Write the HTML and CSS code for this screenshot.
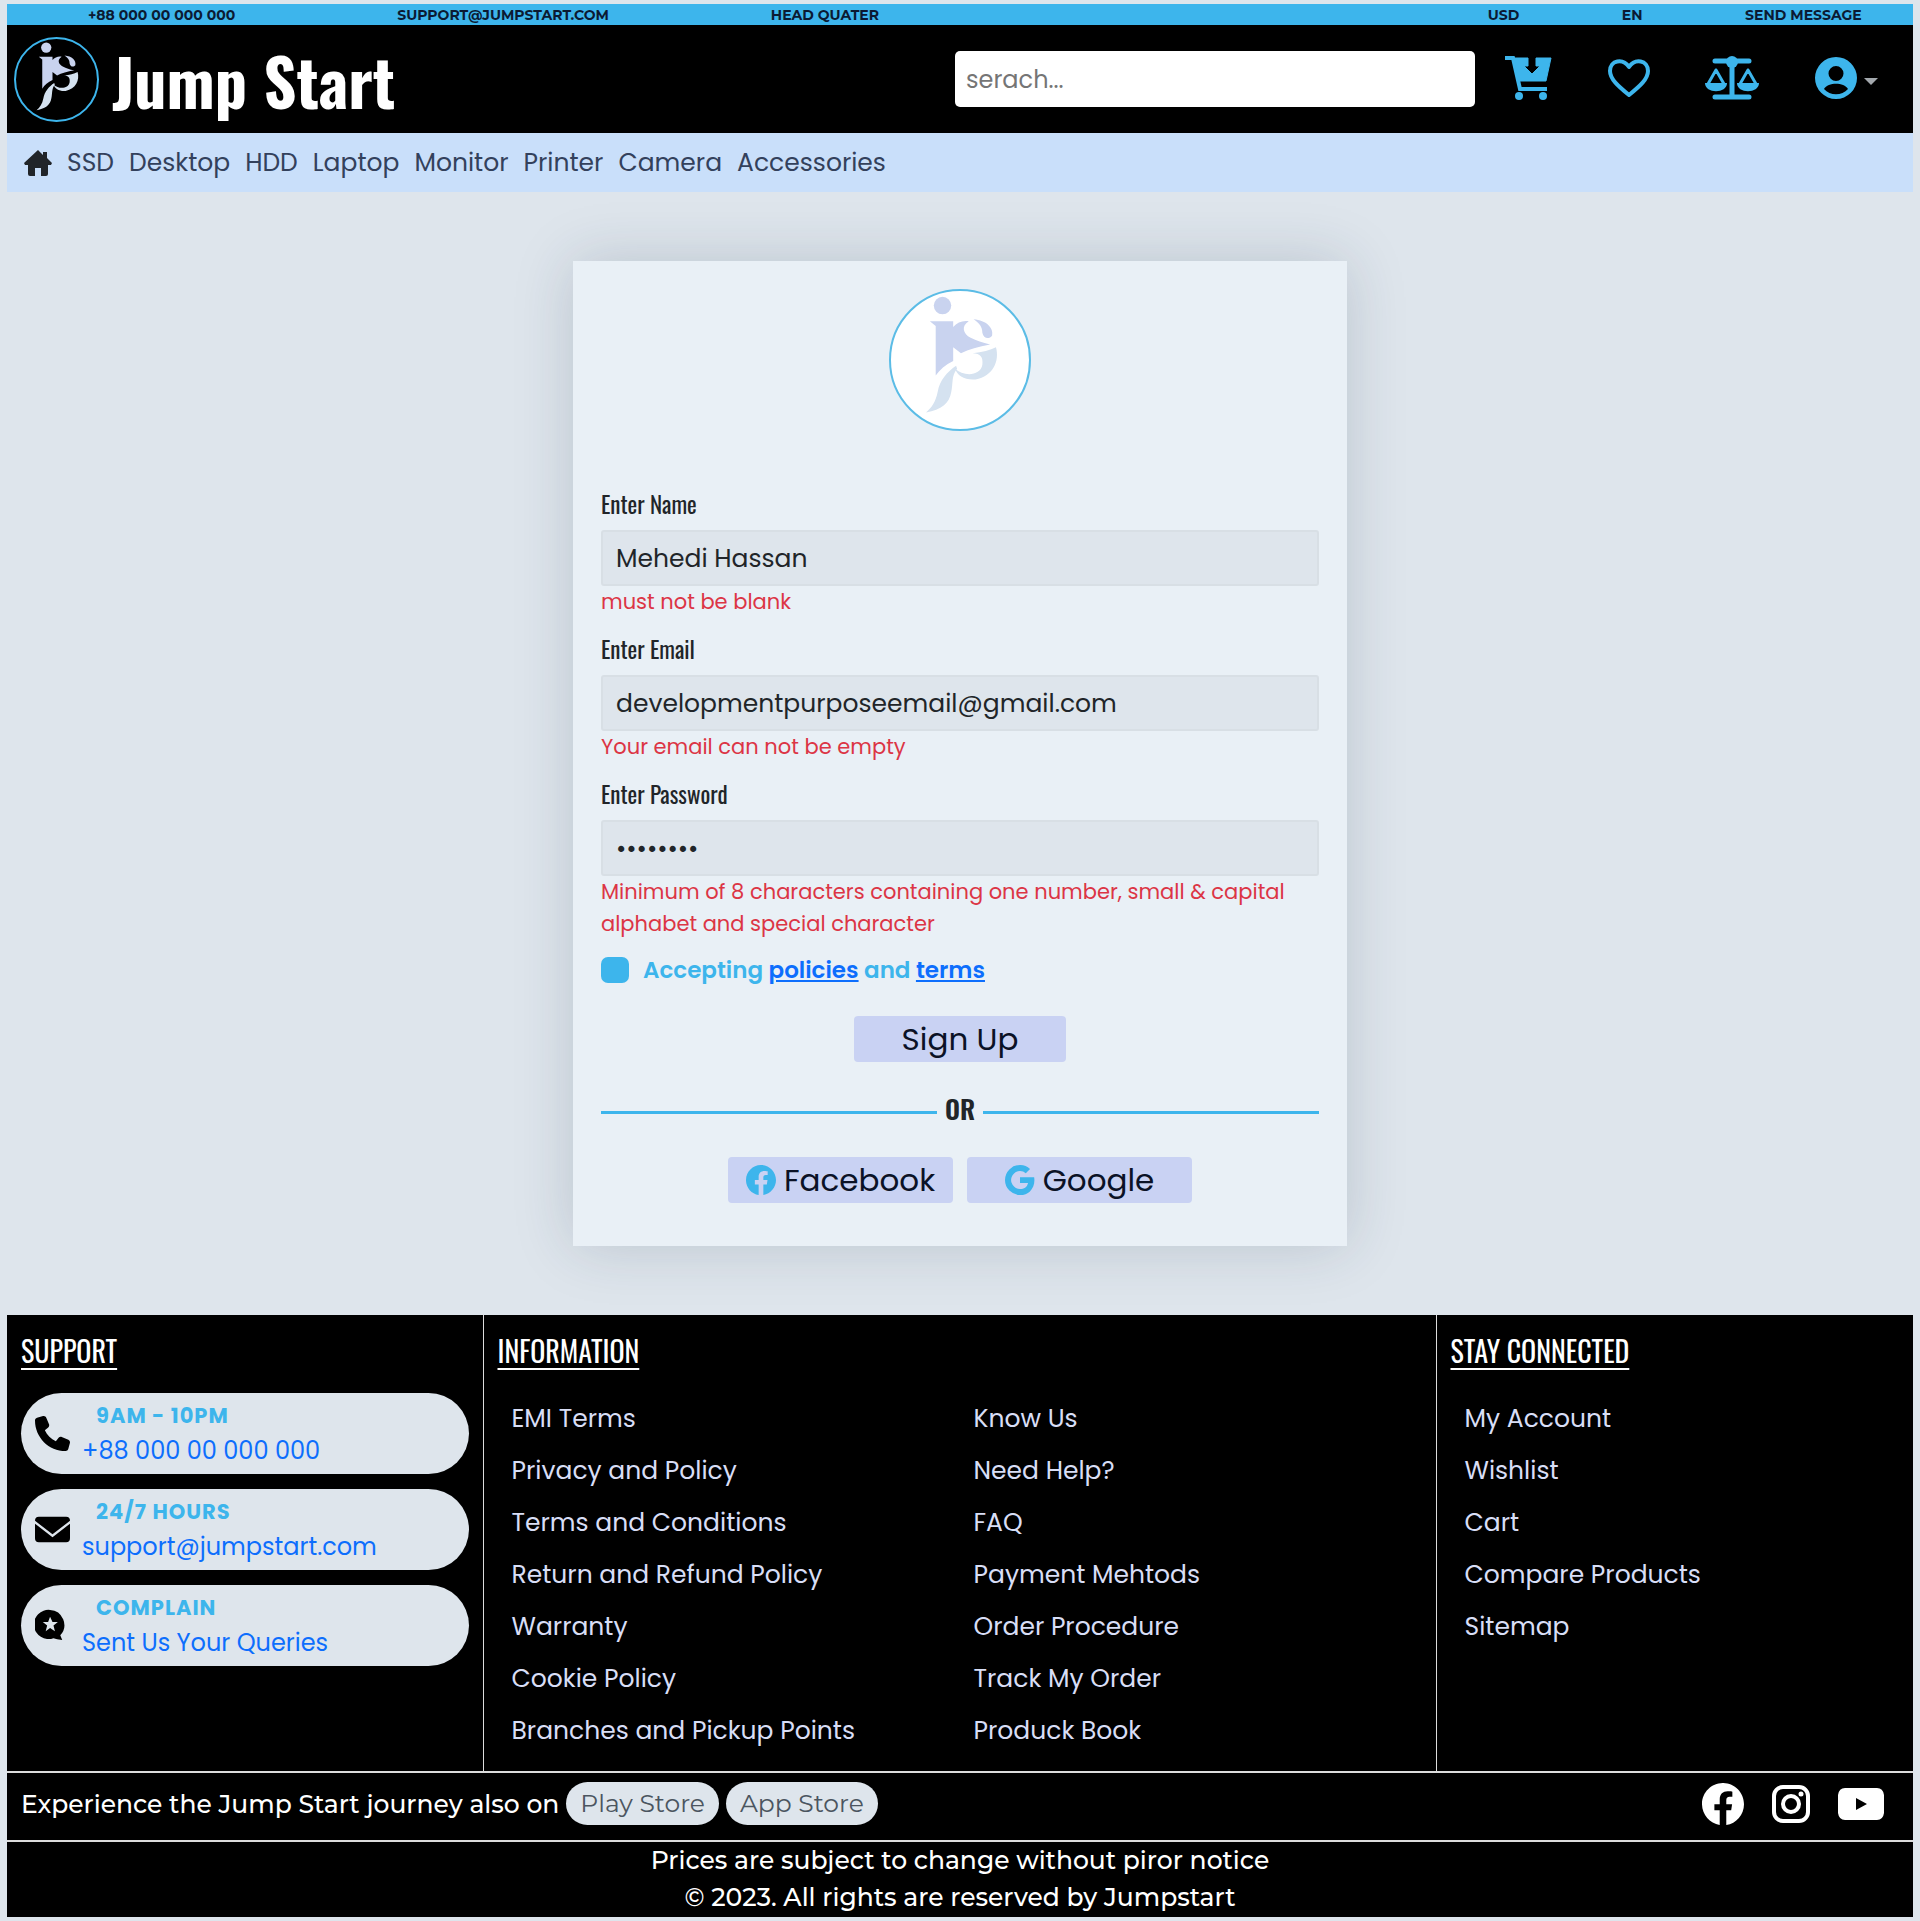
FILE: index.html
```html
<!DOCTYPE html>
<html lang="en">
<head>
<meta charset="utf-8">
<meta name="viewport" content="width=device-width, initial-scale=1">
<title>Jump Start - Sign Up</title>
<link rel="stylesheet" href="styles.css">
</head>
<body>
<svg class="sprite" aria-hidden="true">
  <symbol id="mark" viewBox="0 0 142 142">
    <circle class="mark-a" cx="53" cy="15" r="9"/>
    <path class="mark-a" d="M40 31H64V37C68 32 74 30 80 31C72 36 74 44 82 48C88 51 94 53 102 55C90 57 80 60 72 64L64 58V72C56 76 50 81 46 87V36Z"/>
    <path class="mark-a" d="M85 29C98 30 106 38 104 46C101 50 95 49 94 43C94 37 91 33 85 29Z"/>
    <path class="mark-b" d="M108 58C112 72 105 88 87 91C76 92 68 87 66 80C74 88 92 88 94 76C95 68 92 64 84 64C94 63 102 61 108 58Z"/>
    <path class="mark-b" d="M67 77C58 83 50 92 48 104C46 114 42 120 36 125C52 122 60 116 62 104C64 96 62 87 68 80Z"/>
  </symbol>
  <symbol id="facebook" viewBox="0 0 16 16"><path d="M16 8.049c0-4.446-3.582-8.05-8-8.05C3.58 0-.002 3.603-.002 8.05c0 4.017 2.926 7.347 6.75 7.951v-5.625h-2.03V8.05H6.75V6.275c0-2.017 1.195-3.131 3.022-3.131.876 0 1.791.157 1.791.157v1.98h-1.009c-.993 0-1.303.621-1.303 1.258v1.51h2.218l-.354 2.326H9.25V16c3.824-.604 6.75-3.934 6.75-7.951z"/></symbol>
</svg>

<div class="page">
  <header>
    <div class="topbar">
      <div class="topbar-left">
        <a href="#">+88 000 00 000 000</a>
        <a href="#">SUPPORT@JUMPSTART.COM</a>
        <a href="#">HEAD QUATER</a>
      </div>
      <div class="topbar-right">
        <a href="#">USD</a>
        <a href="#">EN</a>
        <a href="#">SEND MESSAGE</a>
      </div>
    </div>

    <div class="masthead">
      <a class="brand" href="#">
        <svg class="brand-logo" aria-hidden="true"><use href="#mark"/></svg>
        <span class="brand-name">Jump Start</span>
      </a>
      <div class="tools">
        <input class="search" type="search" placeholder="serach..." aria-label="Search">
        <nav class="actions" aria-label="Account">
          <a href="#" aria-label="Cart">
            <svg class="ico" viewBox="0 0 48 44">
              <path d="M1 2H9L16 33H43" fill="none" stroke="currentColor" stroke-width="4"/>
              <path d="M10 2H24V10H20L28 18L36 10H32V2H47L42 25H14Z" stroke="currentColor" stroke-width="1" stroke-linejoin="round"/>
              <circle cx="15" cy="40" r="4"/><circle cx="39" cy="40" r="4"/>
            </svg>
          </a>
          <a href="#" aria-label="Wishlist">
            <svg class="ico" viewBox="0 0 48 44">
              <path d="M24 39C13 30 5 23 5 15C5 4 18 2 24 11C30 2 43 4 43 15C43 23 35 30 24 39Z" fill="none" stroke="currentColor" stroke-width="4" stroke-linejoin="round"/>
            </svg>
          </a>
          <a href="#" aria-label="Compare">
            <svg class="ico ico-wide" viewBox="0 0 54 44">
              <path d="M10 5H44M10 41H44M27 5V40" fill="none" stroke="currentColor" stroke-width="5" stroke-linecap="round"/>
              <circle cx="27" cy="6" r="6"/>
              <path d="M11 14L3 28M11 14L19 28M43 14L35 28M43 14L51 28" fill="none" stroke="currentColor" stroke-width="3" stroke-linecap="round"/>
              <path d="M0 27H22C22 38 0 38 0 27ZM32 27H54C54 38 32 38 32 27Z"/>
            </svg>
          </a>
          <a class="account" href="#" aria-label="Profile">
            <svg class="ico" viewBox="0 0 44 44">
              <path fill-rule="evenodd" d="M22 1A21 21 0 1 1 22 43A21 21 0 1 1 22 1ZM22 10A7.500 7.500 0 1 0 22 25A7.500 7.500 0 1 0 22 10ZM10 33C16 40 28 40 34 33C30 26 14 26 10 33Z"/>
            </svg>
            <span class="caret"></span>
          </a>
        </nav>
      </div>
    </div>

    <nav class="menu" aria-label="Categories">
      <a href="#" aria-label="Home"><svg class="home" viewBox="0 0 28 26"><path d="M14 0L0 13L1 15H4V24Q4 26 6 26H11V18H17V26H22Q24 26 24 24V15H27L28 13L23 8V2H19V5Z"/></svg></a>
      <a href="#">SSD</a>
      <a href="#">Desktop</a>
      <a href="#">HDD</a>
      <a href="#">Laptop</a>
      <a href="#">Monitor</a>
      <a href="#">Printer</a>
      <a href="#">Camera</a>
      <a href="#">Accessories</a>
    </nav>
  </header>

  <main>
    <form class="card">
      <svg class="card-logo" aria-hidden="true"><use href="#mark"/></svg>
      <div class="field">
        <label for="name">Enter Name</label>
        <input id="name" type="text" value="Mehedi Hassan">
        <p class="error">must not be blank</p>
      </div>
      <div class="field">
        <label for="email">Enter Email</label>
        <input id="email" type="email" value="developmentpurposeemail@gmail.com">
        <p class="error">Your email can not be empty</p>
      </div>
      <div class="field">
        <label for="password">Enter Password</label>
        <input id="password" type="password" value="Abcd123!">
        <p class="error">Minimum of 8 characters containing one number, small &amp; capital alphabet and special character</p>
      </div>
      <div class="accept">
        <input id="accept" type="checkbox">
        <label for="accept">Accepting <a href="#">policies</a> and <a href="#">terms</a></label>
      </div>
      <button class="btn btn-main" type="submit">Sign Up</button>
      <div class="divider"><span>OR</span></div>
      <div class="social-login">
        <button class="btn" type="button"><svg aria-hidden="true"><use href="#facebook"/></svg>Facebook</button>
        <button class="btn" type="button"><svg viewBox="0 0 16 16" aria-hidden="true"><path d="M15.545 6.558a9.42 9.42 0 0 1 .139 1.626c0 2.434-.87 4.492-2.384 5.885h.002C11.978 15.292 10.158 16 8 16A8 8 0 1 1 8 0a7.689 7.689 0 0 1 5.352 2.082l-2.284 2.284A4.347 4.347 0 0 0 8 3.166c-2.087 0-3.86 1.408-4.492 3.304a4.792 4.792 0 0 0 0 3.063h.003c.635 1.893 2.405 3.301 4.492 3.301 1.078 0 2.004-.276 2.722-.764h-.003a3.702 3.702 0 0 0 1.599-2.431H8v-3.08h7.545z"/></svg>Google</button>
      </div>
    </form>
  </main>

  <footer>
    <div class="columns">
      <section>
        <h2>SUPPORT</h2>
        <div class="pills">
          <div class="pill">
            <svg viewBox="0 0 512 512" aria-hidden="true"><path d="M164.900 24.600c-7.700-18.600-28-28.500-47.400-23.200l-88 24C12.100 30.200 0 46 0 64C0 311.400 200.600 512 448 512c18 0 33.800-12.100 38.600-29.500l24-88c5.300-19.400-4.600-39.700-23.200-47.400l-96-40c-16.300-6.800-35.200-2.100-46.300 11.600L304.700 368C234.300 334.700 177.300 277.700 144 207.300L193.300 167c13.700-11.200 18.400-30 11.600-46.300l-40-96z"/></svg>
            <div><h3>9AM - 10PM</h3><a href="#">+88 000 00 000 000</a></div>
          </div>
          <div class="pill">
            <svg viewBox="0 0 36 36" aria-hidden="true"><path d="M4 5H32Q36 5 36 9L18 23L0 9Q0 5 4 5ZM0 12L18 26L36 12V27Q36 31 32 31H4Q0 31 0 27Z"/></svg>
            <div><h3>24/7 HOURS</h3><a href="#">support@jumpstart.com</a></div>
          </div>
          <div class="pill">
            <svg viewBox="0 0 36 36" aria-hidden="true"><path fill-rule="evenodd" d="M15.500 2A15.500 15.500 0 0 1 26 28L28 33Q22 32 19 31A15 15 0 1 1 15.500 2ZM15.500 9L13.500 14.500H8L12.500 18L11 24L15.500 20.500L20.500 24L19 18L23.500 14.500H18Z"/></svg>
            <div><h3>COMPLAIN</h3><a href="#">Sent Us Your Queries</a></div>
          </div>
        </div>
      </section>
      <section>
        <h2>INFORMATION</h2>
        <div class="lists">
          <ul>
            <li><a href="#">EMI Terms</a></li>
            <li><a href="#">Privacy and Policy</a></li>
            <li><a href="#">Terms and Conditions</a></li>
            <li><a href="#">Return and Refund Policy</a></li>
            <li><a href="#">Warranty</a></li>
            <li><a href="#">Cookie Policy</a></li>
            <li><a href="#">Branches and Pickup Points</a></li>
          </ul>
          <ul>
            <li><a href="#">Know Us</a></li>
            <li><a href="#">Need Help?</a></li>
            <li><a href="#">FAQ</a></li>
            <li><a href="#">Payment Mehtods</a></li>
            <li><a href="#">Order Procedure</a></li>
            <li><a href="#">Track My Order</a></li>
            <li><a href="#">Produck Book</a></li>
          </ul>
        </div>
      </section>
      <section>
        <h2>STAY CONNECTED</h2>
        <ul>
          <li><a href="#">My Account</a></li>
          <li><a href="#">Wishlist</a></li>
          <li><a href="#">Cart</a></li>
          <li><a href="#">Compare Products</a></li>
          <li><a href="#">Sitemap</a></li>
        </ul>
      </section>
    </div>
    <div class="apps">
      <div class="stores">
        <span>Experience the Jump Start journey also on</span>
        <a href="#">Play Store</a>
        <a href="#">App Store</a>
      </div>
      <div class="social">
        <a href="#" aria-label="Facebook"><svg width="42" height="42"><use href="#facebook"/></svg></a>
        <a href="#" aria-label="Instagram"><svg width="38" height="38" viewBox="0 0 38 38"><rect x="2" y="2" width="34" height="34" rx="9" fill="none" stroke="currentColor" stroke-width="4"/><circle cx="19" cy="19" r="8" fill="none" stroke="currentColor" stroke-width="4"/><circle cx="29" cy="9" r="2.500"/></svg></a>
        <a href="#" aria-label="YouTube"><svg width="46" height="32" viewBox="0 0 46 32"><path fill-rule="evenodd" d="M7 0H39Q45 0 46 7V25Q45 32 39 32H7Q1 32 0 25V7Q1 0 7 0ZM18 10V22L29 16Z"/></svg></a>
      </div>
    </div>
    <div class="legal">
      <p>Prices are subject to change without piror notice</p>
      <p>© 2023. All rights are reserved by Jumpstart</p>
    </div>
  </footer>
</div>
</body>
</html>
```
FILE: styles.css
```css
:root {
  --sky: #3db5ec;
  --mist: #dee5ec;
  --lavender: #c9d2f3;
  --link: #0d6efd;
  --ink: #212529;
  --condensed: "Oswald", "Liberation Sans Narrow", "DejaVu Sans Condensed", sans-serif;
}

* { box-sizing: border-box; }

body {
  margin: 0;
  background: var(--mist);
  color: var(--ink);
  font-family: "Poppins", Inter, sans-serif;
  font-size: 25px;
}

a { color: inherit; text-decoration: none; }
p, h2, h3, ul { margin: 0; padding: 0; }
ul { list-style: none; }
svg { fill: currentColor; display: block; }
.sprite { display: none; }
.mark-a { fill: #c9d3ef; }
.mark-b { fill: #d5e2f0; }

.page { padding: 4px 7px; }

/* Header */
.topbar {
  display: flex;
  justify-content: space-between;
  padding-top: 1px;
  background: var(--sky);
  color: #0b1a33;
  font-family: "Montserrat", Inter, sans-serif;
  font-size: 14px;
  font-weight: 700;
  line-height: 20px;
}
.topbar-left, .topbar-right { display: flex; justify-content: space-around; }
.topbar-left { width: 50%; }
.topbar-right { width: 25%; }

.masthead {
  display: flex;
  align-items: center;
  height: 108px;
  background: #000;
}
.brand {
  display: flex;
  flex: 1;
  align-items: center;
  gap: 13px;
  padding-left: 7px;
  color: #fff;
  font-family: var(--condensed);
  font-size: 64px;
  font-weight: 700;
}
.brand-name { padding-top: 2px; }
.brand-logo {
  width: 85px;
  height: 85px;
  border: 2px solid var(--sky);
  border-radius: 50%;
}
.brand .mark-a { fill: #e3e8fb; }
.tools {
  display: flex;
  align-items: center;
  width: 958px;
  padding-right: 35px;
}
.search {
  width: 520px;
  height: 56px;
  padding: 0 11px;
  border: 0;
  border-radius: 5px;
  background: #fff;
  font: inherit;
  font-size: 24px;
}
.search::placeholder { color: #757575; opacity: 1; }
.actions {
  display: flex;
  flex: 1;
  align-items: center;
  justify-content: space-between;
  padding: 0 0 3px 29px;
  color: var(--sky);
}
.ico { width: 48px; height: 44px; }
.ico-wide { width: 54px; }
.account { display: flex; align-items: center; gap: 4px; }
.caret {
  border: 7px solid transparent;
  border-top-color: #a3a8ad;
  border-bottom: 0;
  margin-top: 8px;
}

.menu {
  display: flex;
  align-items: center;
  gap: 15px;
  height: 59px;
  padding: 0 17px;
  background: #c9dffa;
  color: #33415c;
}
.home { width: 28px; height: 26px; color: var(--ink); }

/* Sign-up card */
main { padding: 69px 0; }
.card {
  display: flex;
  flex-direction: column;
  width: 774px;
  max-width: 100%;
  margin: 0 auto;
  padding: 28px 28px 43px;
  background: #e9f0f6;
  box-shadow: 0 0 56px rgba(33, 50, 70, 0.18);
}
.card-logo {
  align-self: center;
  width: 142px;
  height: 142px;
  margin-bottom: 56px;
  border: 2px solid #5bbce6;
  border-radius: 50%;
  background: #fff;
}
.field { display: flex; flex-direction: column; margin-bottom: 14px; }
.field label {
  margin-bottom: 8px;
  font-family: var(--condensed);
  font-size: 23px;
  line-height: 35px;
}
.field input {
  height: 56px;
  padding: 2px 13px 0;
  border: 2px solid #d8dfe5;
  border-radius: 3px;
  background: var(--mist);
  color: var(--ink);
  font: inherit;
}
.error { color: #dc3545; font-size: 21px; line-height: 32px; }

.accept { display: flex; align-items: center; gap: 14px; line-height: 32px; }
.accept input {
  appearance: none;
  width: 28px;
  height: 26px;
  margin: 0;
  border-radius: 7px;
  background: var(--sky);
}
.accept label { color: var(--sky); font-size: 23px; font-weight: 600; }
.accept a { color: var(--link); text-decoration: underline; }

.btn {
  display: flex;
  align-items: center;
  justify-content: center;
  gap: 8px;
  width: 225px;
  height: 46px;
  padding: 0;
  border: 0;
  border-radius: 4px;
  background: var(--lavender);
  color: #0b1226;
  font: inherit;
  font-size: 31px;
}
.btn svg { width: 30px; height: 30px; color: var(--sky); }
.btn-main { align-self: center; width: 212px; margin-top: 30px; }

.divider {
  display: flex;
  align-items: center;
  gap: 8px;
  margin: 29px 0 30px;
  font-family: var(--condensed);
  font-size: 26px;
  font-weight: 600;
  line-height: 36px;
}
.divider::before, .divider::after {
  content: "";
  flex: 1;
  height: 3px;
  margin-top: 6px;
  background: var(--sky);
}
.social-login { display: flex; justify-content: center; gap: 14px; }

/* Footer */
footer { background: #000; color: #fff; }
.columns {
  display: grid;
  grid-template-columns: 1fr 2fr 1fr;
  border-bottom: 2px solid #dcdcdc;
}
.columns section { padding: 14px; }
.columns section:not(:last-child) { border-right: 1px solid #dcdcdc; }
h2 {
  margin-bottom: 20px;
  font-family: var(--condensed);
  font-size: 28px;
  font-weight: 400;
  line-height: 44px;
  text-decoration: underline;
  text-decoration-thickness: 2px;
  text-underline-offset: 5px;
}
.pills { display: flex; flex-direction: column; gap: 15px; }
.pill {
  display: flex;
  align-items: center;
  gap: 12px;
  height: 81px;
  padding: 0 14px;
  border-radius: 41px;
  background: var(--mist);
  color: #000;
}
.pill svg { width: 35px; height: 35px; }
.pill h3 {
  padding-left: 14px;
  color: var(--sky);
  font-size: 21px;
  letter-spacing: 1px;
  line-height: 34px;
}
.pill a { display: block; color: var(--link); font-size: 24px; line-height: 35px; }
.lists { display: grid; grid-template-columns: 1fr 1fr; }
li { padding-left: 14px; color: #d8def6; line-height: 52px; }

.apps {
  display: flex;
  align-items: center;
  justify-content: space-between;
  height: 69px;
  padding: 0 29px 6px 14px;
  border-bottom: 2px solid #dcdcdc;
  font-family: "Montserrat", Inter, sans-serif;
}
.stores { display: flex; align-items: center; gap: 7px; }
.stores span { font-weight: 500; }
.stores a {
  padding: 0 14px;
  border-radius: 22px;
  background: var(--mist);
  color: #4b5560;
  line-height: 43px;
}
.social { display: flex; align-items: center; gap: 28px; }
.legal {
  padding-bottom: 1px;
  font-family: "Montserrat", Inter, sans-serif;
  font-weight: 500;
  line-height: 37px;
  text-align: center;
}
```
